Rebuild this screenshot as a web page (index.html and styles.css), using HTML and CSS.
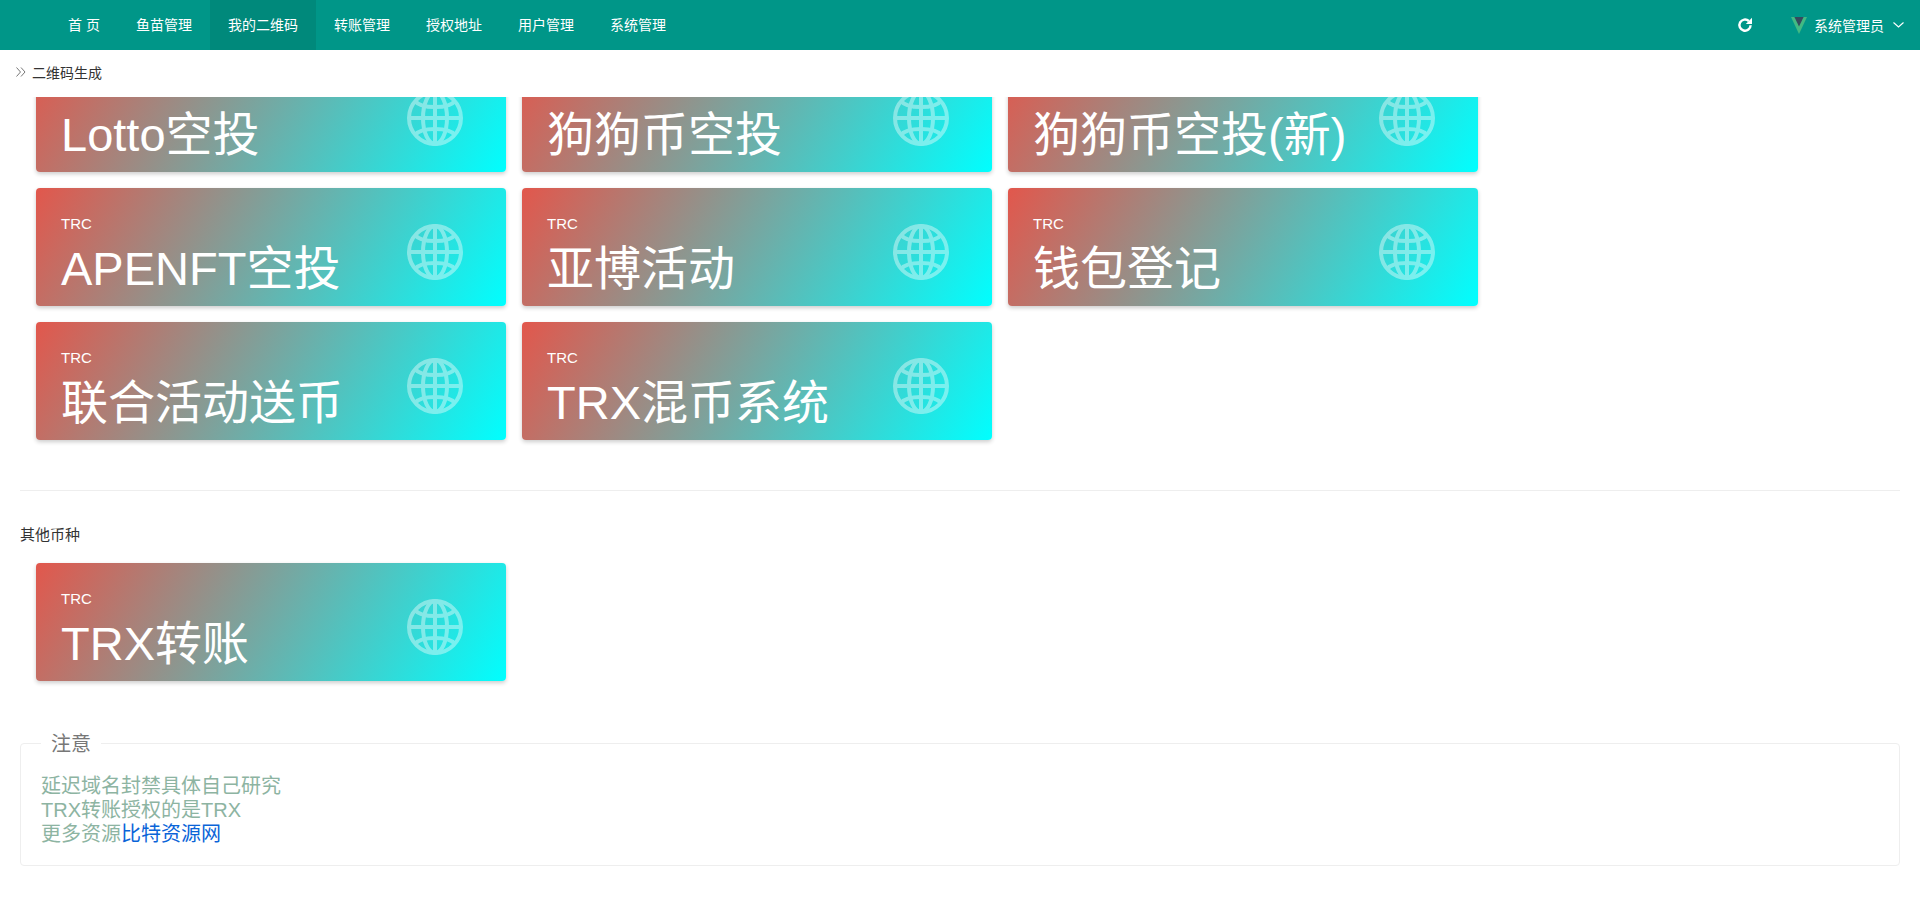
FILE: index.html
```html
<!DOCTYPE html>
<html lang="zh-CN">
<head>
  <meta charset="UTF-8">
  <meta name="viewport" content="width=device-width, initial-scale=1.0">
  <title>二维码生成</title>
  <link rel="stylesheet" href="styles.css">
</head>
<body>
  <svg class="svg-defs" width="0" height="0" aria-hidden="true">
    <symbol id="globe" viewBox="0 0 56 56">
      <g fill="none" stroke="#fff" stroke-width="4">
        <circle cx="28" cy="28" r="26"/>
        <ellipse cx="28" cy="28" rx="12" ry="26"/>
        <path d="M28 2V54M2 28H54"/>
        <path d="M8 11C14 19 42 19 48 11M8 45C14 37 42 37 48 45"/>
      </g>
    </symbol>
  </svg>

  <header class="topbar">
    <nav class="nav">
      <a class="nav-item">首&nbsp;页</a>
      <a class="nav-item">鱼苗管理</a>
      <a class="nav-item active">我的二维码</a>
      <a class="nav-item">转账管理</a>
      <a class="nav-item">授权地址</a>
      <a class="nav-item">用户管理</a>
      <a class="nav-item">系统管理</a>
    </nav>
    <div class="topbar-right">
      <svg class="refresh" viewBox="0 0 16 16" width="16" height="16">
        <path d="M13.6 8.2A5.6 5.6 0 1 1 11.8 4" fill="none" stroke="#fff" stroke-width="2.4"/>
        <path d="M15 .8V7H8.8Z" fill="#fff"/>
      </svg>
      <div class="user">
        <svg class="vue-logo" viewBox="0 0 16 17" width="16" height="17">
          <path d="M0 0H16L8 17Z" fill="#42b983"/>
          <path d="M3.4 0H12.6L8 9.6Z" fill="#35495e"/>
        </svg>
        <span>系统管理员</span>
        <svg class="chevron" viewBox="0 0 11 6" width="11" height="6">
          <path d="M.5 .5L5.5 5L10.5 .5" fill="none" stroke="#fff" stroke-width="1.1"/>
        </svg>
      </div>
    </div>
  </header>

  <div class="breadcrumb">
    <svg class="crumb-icon" viewBox="0 0 10 10" width="10" height="10">
      <path d="M.5 .5L4.5 5L.5 9.5M5 .5L9 5L5 9.5" fill="none" stroke="#777" stroke-width="1"/>
    </svg>
    <span>二维码生成</span>
  </div>

  <main class="content">
    <div class="inner">
      <section class="cards">
        <div class="card"><div class="card-label">TRC</div><div class="card-title">Lotto空投</div><svg class="card-icon"><use href="#globe"/></svg></div>
        <div class="card"><div class="card-label">TRC</div><div class="card-title">狗狗币空投</div><svg class="card-icon"><use href="#globe"/></svg></div>
        <div class="card"><div class="card-label">TRC</div><div class="card-title">狗狗币空投(新)</div><svg class="card-icon"><use href="#globe"/></svg></div>
        <div class="card"><div class="card-label">TRC</div><div class="card-title">APENFT空投</div><svg class="card-icon"><use href="#globe"/></svg></div>
        <div class="card"><div class="card-label">TRC</div><div class="card-title">亚博活动</div><svg class="card-icon"><use href="#globe"/></svg></div>
        <div class="card"><div class="card-label">TRC</div><div class="card-title">钱包登记</div><svg class="card-icon"><use href="#globe"/></svg></div>
        <div class="card"><div class="card-label">TRC</div><div class="card-title">联合活动送币</div><svg class="card-icon"><use href="#globe"/></svg></div>
        <div class="card"><div class="card-label">TRC</div><div class="card-title">TRX混币系统</div><svg class="card-icon"><use href="#globe"/></svg></div>
      </section>

      <hr class="divider">

      <h3 class="group-title">其他币种</h3>
      <section class="cards">
        <div class="card"><div class="card-label">TRC</div><div class="card-title">TRX转账</div><svg class="card-icon"><use href="#globe"/></svg></div>
      </section>

      <fieldset class="note">
        <legend>注意</legend>
        <div class="note-body">
          延迟域名封禁具体自己研究<br>
          TRX转账授权的是TRX<br>
          更多资源<a class="note-link">比特资源网</a>
        </div>
      </fieldset>
    </div>
  </main>
</body>
</html>
```

FILE: styles.css
```css
html, body {
  height: 100%;
  margin: 0;
  overflow: hidden;
}
body {
  display: flex;
  flex-direction: column;
  font-family: "Liberation Sans", "Noto Sans CJK SC", sans-serif;
  font-size: 14px;
  color: #333;
  background-color: #fff;
}
.svg-defs {
  position: absolute;
}

/* top bar */
.topbar {
  display: flex;
  flex: none;
  justify-content: space-between;
  height: 50px;
  padding-left: 50px;
  background-color: #009688;
  color: #fff;
}
.nav {
  display: flex;
}
.nav-item {
  padding: 0 18px;
  line-height: 50px;
}
.nav-item.active {
  background-color: #00897b;
}
.topbar-right {
  display: flex;
  align-items: center;
  padding-right: 16px;
}
.refresh {
  margin-right: 38px;
}
.user {
  display: flex;
  align-items: center;
}
.vue-logo {
  margin-right: 7px;
}
.chevron {
  margin-left: 9px;
}

/* breadcrumb */
.breadcrumb {
  display: flex;
  flex: none;
  align-items: center;
  height: 43px;
  padding: 0 0 4px 16px;
}
.crumb-icon {
  margin-right: 6px;
}

/* main area, scrolled a little past the first row */
.content {
  flex: 1;
  overflow: hidden;
}
.inner {
  margin-top: -43px;
  padding: 0 20px;
}
.cards {
  display: grid;
  grid-template-columns: repeat(3, 470px);
  gap: 16px;
  padding-left: 16px;
}
.card {
  position: relative;
  height: 118px;
  padding: 27px 25px 0;
  box-sizing: border-box;
  border-radius: 4px;
  background: linear-gradient(122deg, #e2574c, #00ffff);
  box-shadow: 0 2px 4px rgba(0, 0, 0, 0.2);
  color: #fff;
}
.card-label {
  font-size: 15px;
  line-height: 18px;
}
.card-title {
  margin-top: 6px;
  font-size: 47px;
  line-height: 60px;
  white-space: nowrap;
}
.card-icon {
  position: absolute;
  top: 36px;
  right: 43px;
  width: 56px;
  height: 56px;
  opacity: 0.4;
}
.divider {
  height: 1px;
  margin: 50px 0 0;
  border: 0;
  background-color: #eee;
}
.group-title {
  margin: 35px 0 19px;
  font-size: 15px;
  font-weight: normal;
  line-height: 18px;
}

/* note box */
.note {
  margin: 50px 0 0;
  padding: 19px 20px 19px;
  border: 1px solid #eee;
  border-radius: 4px;
}
.note legend {
  position: relative;
  top: 1px;
  padding: 0 10px;
  font-size: 20px;
  line-height: 24px;
  color: #777;
}
.note-body {
  font-size: 20px;
  line-height: 24px;
  color: #8db4a2;
}
.note-link {
  color: #0a64d8;
}
```
